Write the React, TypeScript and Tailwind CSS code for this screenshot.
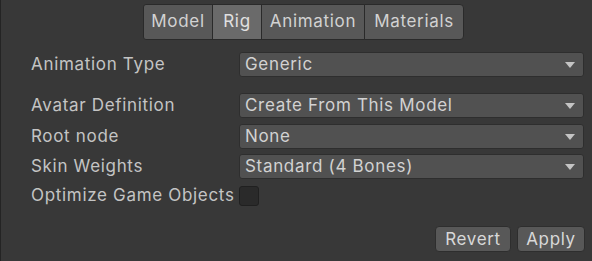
function Dropdown({ value }: { value: string }) {
  return (
    <div className="flex items-center justify-between h-[25px] ml-[238px] mr-[8px] flex-1 rounded-[3px] bg-[#515151] border border-[#2e2e2e] pl-[5px] pr-[8px] text-[#d2d2d2]">
      <span>{value}</span>
      <svg width="10" height="6" viewBox="0 0 10 6" className="shrink-0">
        <path d="M0 0 L10 0 L5 6 Z" fill="#c4c4c4" />
      </svg>
    </div>
  );
}

function Row({ label, className, children }: { label: string; className?: string; children: React.ReactNode }) {
  return (
    <div className={"relative flex items-center " + (className ?? "")}>
      <span className="absolute left-[30px] whitespace-nowrap">{label}</span>
      {children}
    </div>
  );
}

const tabs = [
  { name: "Model", w: "w-[70px]" },
  { name: "Rig", w: "w-[50px]" },
  { name: "Animation", w: "w-[104px]" },
  { name: "Materials", w: "w-[100px]" },
];

function App() {
  return (
    <div
      className="w-[592px] h-[261px] bg-[#383838] border-l border-[#242424] text-[#c4c4c4] text-[17px] tracking-[0.04em] flex flex-col"
      style={{ fontFamily: "Inter, 'Noto Sans', sans-serif" }}
    >
      {/* tabs */}
      <div className="flex ml-[142px] mt-[4px] h-[36px]">
        {tabs.map((t, i) => (
          <div
            key={t.name}
            className={
              "flex items-center justify-center border border-[#2a2a2a] -ml-px first:ml-0 " +
              t.w +
              (t.name === "Rig" ? " bg-[#6a6a6a] text-[#e0e0e0]" : " bg-[#585858] text-[#d2d2d2]") +
              (i === 0 ? " rounded-l-[3px]" : "") +
              (i === tabs.length - 1 ? " rounded-r-[4px]" : "")
            }
          >
            {t.name}
          </div>
        ))}
      </div>

      <Row label="Animation Type" className="mt-[12px]">
        <Dropdown value="Generic" />
      </Row>

      <Row label="Avatar Definition" className="mt-[16px]">
        <Dropdown value="Create From This Model" />
      </Row>
      <Row label="Root node" className="mt-[6px]">
        <Dropdown value="None" />
      </Row>
      <Row label="Skin Weights" className="mt-[5px]">
        <Dropdown value="Standard (4 Bones)" />
      </Row>
      <Row label="Optimize Game Objects" className="mt-[7px]">
        <div className="ml-[238px] w-[20px] h-[20px] rounded-[3px] bg-[#2a2a2a] border border-[#202020]" />
      </Row>

      {/* buttons */}
      <div className="flex justify-end gap-[6px] mr-[7px] mt-[20px]">
        <button className="h-[26px] w-[76px] rounded-[4px] bg-[#585858] border border-[#2e2e2e] text-[#d8d8d8]">
          Revert
        </button>
        <button className="h-[26px] w-[68px] rounded-[4px] bg-[#585858] border border-[#2e2e2e] text-[#d8d8d8]">
          Apply
        </button>
      </div>
    </div>
  );
}

export default App;
